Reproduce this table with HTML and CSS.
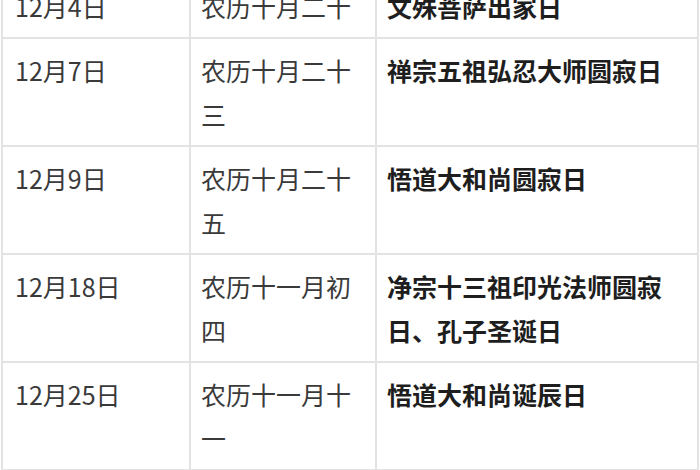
FILE: index.html
```html
<!DOCTYPE html>
<html lang="zh-CN">
<head>
<meta charset="utf-8">
<link rel="stylesheet" href="styles.css">
</head>
<body>
<table class="calendar">
  <colgroup>
    <col class="c-date">
    <col class="c-lunar">
    <col class="c-event">
  </colgroup>
  <tbody>
    <tr>
      <td>12月4日</td>
      <td>农历十月二十</td>
      <td class="event">文殊菩萨出家日</td>
    </tr>
    <tr>
      <td>12月7日</td>
      <td>农历十月二十三</td>
      <td class="event">禅宗五祖弘忍大师圆寂日</td>
    </tr>
    <tr>
      <td>12月9日</td>
      <td>农历十月二十五</td>
      <td class="event">悟道大和尚圆寂日</td>
    </tr>
    <tr>
      <td>12月18日</td>
      <td>农历十一月初四</td>
      <td class="event">净宗十三祖印光法师圆寂日、孔子圣诞日</td>
    </tr>
    <tr>
      <td>12月25日</td>
      <td>农历十一月十一</td>
      <td class="event">悟道大和尚诞辰日</td>
    </tr>
  </tbody>
</table>
</body>
</html>
```

FILE: styles.css
```css
html, body {
  margin: 0;
  padding: 0;
  background: #ffffff;
}

body {
  font-family: "Noto Sans CJK SC", "Noto Sans", sans-serif;
  overflow: hidden;
}

.calendar {
  border-collapse: collapse;
  table-layout: fixed;
  width: 696px;
  margin: -27px 0 0 1px;
}

.c-date { width: 188px; }
.c-lunar { width: 186px; }
.c-event { width: 322px; }

.calendar td {
  border: 2px solid #e3e3e3;
  padding: 9px 14px 9px 10px;
  vertical-align: top;
  font-size: 25px;
  line-height: 44px;
  color: #3a3a3a;
  word-break: break-all;
}

.calendar td:first-child {
  padding-left: 12px;
}

.calendar td.event {
  font-weight: bold;
  color: #1e1e1e;
}
```
